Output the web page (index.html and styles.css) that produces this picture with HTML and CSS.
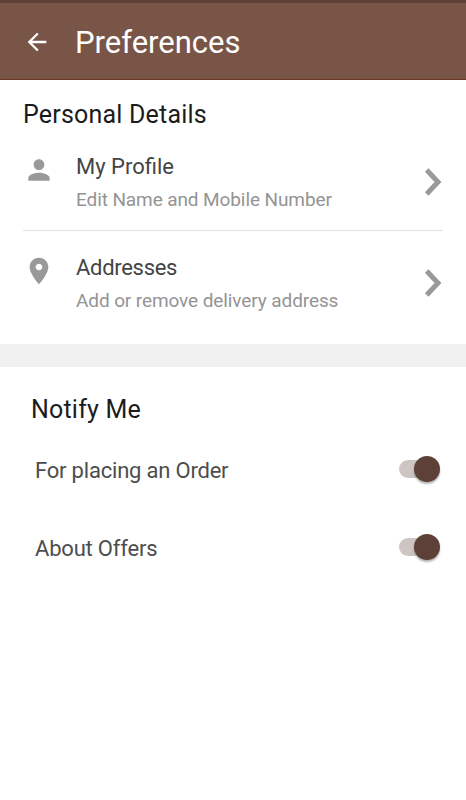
FILE: index.html
```html
<!DOCTYPE html>
<html lang="en">
<head>
    <meta charset="UTF-8">
    <meta name="viewport" content="width=device-width, initial-scale=1.0">
    <title>Preferences</title>
    <link rel="stylesheet" href="styles.css">
</head>
<body>
    <header class="toolbar">
        <svg class="back" viewBox="0 0 24 24"><path d="M20 11H7.83l5.59-5.59L12 4l-8 8 8 8 1.41-1.41L7.83 13H20v-2z"/></svg>
        <h1>Preferences</h1>
    </header>

    <section class="details">
        <h2>Personal Details</h2>
        <div class="item">
            <svg class="item-icon" viewBox="0 0 24 24"><path d="M12 12c2.21 0 4-1.79 4-4s-1.79-4-4-4-4 1.79-4 4 1.79 4 4 4zm0 2c-2.67 0-8 1.34-8 4v2h16v-2c0-2.66-5.33-4-8-4z"/></svg>
            <div class="item-text">
                <p class="item-name">My Profile</p>
                <p class="item-info">Edit Name and Mobile Number</p>
            </div>
            <svg class="chevron" viewBox="0 0 18 30"><path d="M2.7 3L14 15 2.7 27"/></svg>
        </div>
        <div class="item">
            <svg class="item-icon" viewBox="0 0 24 24"><path d="M12 2C8.13 2 5 5.13 5 9c0 5.25 7 13 7 13s7-7.75 7-13c0-3.87-3.13-7-7-7zm0 9.5c-1.38 0-2.5-1.12-2.5-2.5s1.12-2.5 2.5-2.5 2.5 1.12 2.5 2.5-1.12 2.5-2.5 2.5z"/></svg>
            <div class="item-text">
                <p class="item-name addresses">Addresses</p>
                <p class="item-info">Add or remove delivery address</p>
            </div>
            <svg class="chevron" viewBox="0 0 18 30"><path d="M2.7 3L14 15 2.7 27"/></svg>
        </div>
    </section>

    <section class="notify">
        <h2>Notify Me</h2>
        <div class="option">
            <span>For placing an Order</span>
            <div class="switch"><div class="thumb"></div></div>
        </div>
        <div class="option">
            <span>About Offers</span>
            <div class="switch"><div class="thumb"></div></div>
        </div>
    </section>
</body>
</html>
```
FILE: styles.css
```css
* {
    box-sizing: border-box;
}

body {
    margin: 0;
    height: 800px;
    background: #fff;
    font-family: Roboto, sans-serif;
    overflow: hidden;
}

h1, h2, p {
    margin: 0;
    font-weight: 400;
    white-space: nowrap;
}

/* Toolbar */
.toolbar {
    display: flex;
    align-items: center;
    height: 80px;
    padding-left: 23px;
    background: #795548;
    border-top: 3px solid #5d4037;
    border-bottom: 1px solid #6b3a24;
    color: #fff;
}

.toolbar h1 {
    margin-left: 24px;
    padding-top: 4px;
    font-size: 31px;
    line-height: 36px;
}

.back {
    width: 28px;
    height: 28px;
    margin-top: 1px;
    fill: #fff;
}

/* Personal details */
.details {
    height: 264px;
    padding: 20px 23px 0;
}

.details h2,
.notify h2 {
    font-size: 25px;
    line-height: 30px;
    letter-spacing: 0.2px;
    color: #1b1b1b;
}

.item {
    display: flex;
    height: 100px;
    padding-top: 22px;
}

.item + .item {
    border-top: 1px solid #e1e1e1;
}

.item-icon {
    width: 32px;
    height: 32px;
    margin-top: 2px;
    fill: #999;
}

.item-text {
    flex: 1;
    margin: 1px 0 0 21px;
}

.item-name {
    font-size: 22px;
    line-height: 28px;
    color: #444;
}

.addresses {
    letter-spacing: -0.3px;
}

.item-info {
    margin-top: 7px;
    font-size: 19px;
    line-height: 24px;
    letter-spacing: -0.1px;
    color: #949494;
}

.chevron {
    width: 18px;
    height: 30px;
    margin: 15px 1px 0 0;
    fill: none;
    stroke: #999;
    stroke-width: 5;
}

/* Notifications */
.notify {
    border-top: 23px solid #f0f0f0;
    padding: 28px 26px 0 31px;
}

.option {
    display: flex;
    align-items: center;
    justify-content: space-between;
    height: 78px;
    padding-left: 4px;
    font-size: 22px;
    line-height: 28px;
    letter-spacing: -0.2px;
    color: #4d4d4d;
}

.option span {
    padding-top: 3px;
}

.notify h2 + .option {
    margin-top: 5px;
}

.switch {
    display: flex;
    align-items: center;
    justify-content: flex-end;
    width: 41px;
    height: 18px;
    border-radius: 9px;
    background: linear-gradient(to right, #cec5c3 30px, transparent 30px);
}

.thumb {
    width: 26px;
    height: 26px;
    flex: none;
    border-radius: 50%;
    background: #5d4037;
    box-shadow: 0 2px 2px rgba(0, 0, 0, 0.3);
}
```
